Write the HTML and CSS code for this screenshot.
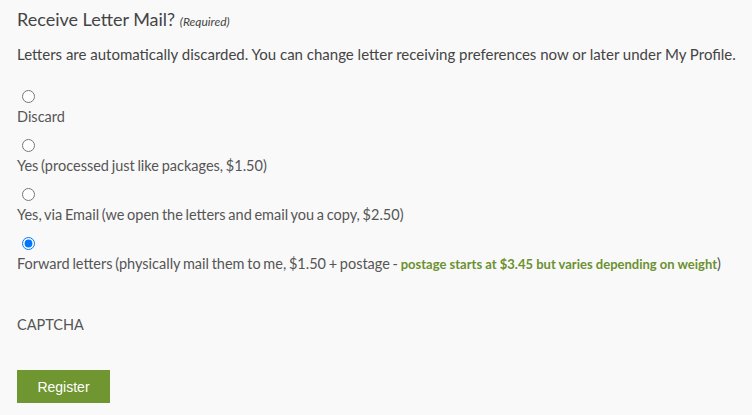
FILE: index.html
```html
<!DOCTYPE html>
<html>
<head>
<meta charset="utf-8">
<link rel="stylesheet" href="styles.css">
</head>
<body>
<form class="form">
  <fieldset class="field">
    <legend class="field-label">Receive Letter Mail? <span class="required">(Required)</span></legend>
    <p class="field-desc">Letters are automatically discarded. You can change letter receiving preferences now or later under My Profile.</p>
    <div class="choices">
      <div class="choice">
        <input type="radio" name="letters" id="c1">
        <label for="c1">Discard</label>
      </div>
      <div class="choice">
        <input type="radio" name="letters" id="c2">
        <label for="c2">Yes (processed just like packages, $1.50)</label>
      </div>
      <div class="choice">
        <input type="radio" name="letters" id="c3">
        <label for="c3">Yes, via Email (we open the letters and email you a copy, $2.50)</label>
      </div>
      <div class="choice">
        <input type="radio" name="letters" id="c4" checked>
        <label for="c4">Forward letters (physically mail them to me, $1.50 + postage - <span class="note">postage starts at $3.45 but varies depending on weight</span>)</label>
      </div>
    </div>
  </fieldset>
  <div class="captcha">CAPTCHA</div>
  <button type="button" class="btn">Register</button>
</form>
</body>
</html>
```
FILE: styles.css
```css
html, body {
  margin: 0;
  padding: 0;
  background: #f9f9f9;
}
body {
  font-family: Lato, "Open Sans", sans-serif;
  color: #555;
  padding: 0 0 0 17px;
}
.field {
  border: 0;
  margin: 0;
  padding: 0;
}
.field-label {
  padding: 0;
  margin: 0;
  font-size: 18px;
  line-height: 22px;
  padding-top: 8px;
  color: #444;
}
.required {
  font-size: 12px;
  font-style: italic;
}
.field-desc {
  margin: 10px 0 0;
  font-size: 15px;
  line-height: 22px;
  color: #444;
}
.choices {
  margin-top: 22px;
  display: flex;
  flex-direction: column;
}
.choice {
  height: 49px;
}
.choice input {
  display: block;
  margin: 3px 3px 0 5px;
}
.choice label {
  display: block;
  font-size: 14.5px;
  line-height: 20px;
  margin-top: 4px;
  white-space: nowrap;
  word-spacing: -1px;
}
.note {
  color: #6b9130;
  font-weight: bold;
  font-size: 13px;
  word-spacing: 0;
}
.captcha {
  margin-top: 32px;
  font-size: 14.5px;
  line-height: 20px;
  color: #555;
}
.btn {
  display: block;
  margin-top: 35px;
  width: 93px;
  height: 33px;
  background: #6f9630;
  border: 0;
  color: #fff;
  font-family: "Liberation Sans", Arial, sans-serif;
  font-size: 14px;
  padding: 0;
}
```
